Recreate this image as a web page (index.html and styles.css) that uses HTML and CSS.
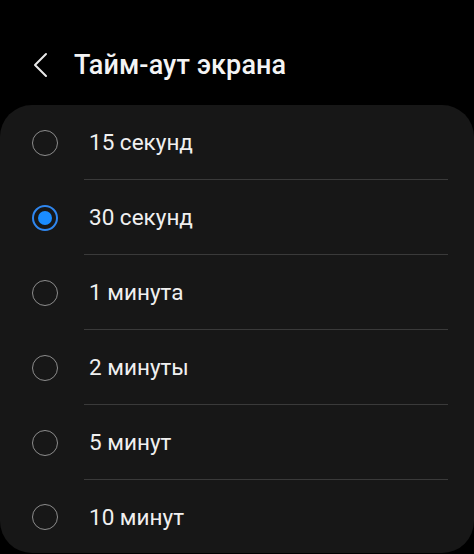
FILE: index.html
```html
<!DOCTYPE html>
<html lang="ru">
<head>
<meta charset="utf-8">
<link rel="stylesheet" href="styles.css">
</head>
<body>
<div class="screen">
  <header class="header">
    <svg class="back" width="24" height="30" viewBox="0 0 24 30">
      <polyline points="17,4 6,15 17,26" fill="none" stroke="#e8e8e8" stroke-width="2" stroke-linecap="round" stroke-linejoin="round"/>
    </svg>
    <h1 class="title">Тайм-аут экрана</h1>
  </header>
  <div class="card">
    <div class="row"><span class="radio"></span><div class="label">15 секунд</div></div>
    <div class="row"><span class="radio on"></span><div class="label">30 секунд</div></div>
    <div class="row"><span class="radio"></span><div class="label">1 минута</div></div>
    <div class="row"><span class="radio"></span><div class="label">2 минуты</div></div>
    <div class="row"><span class="radio"></span><div class="label">5 минут</div></div>
    <div class="row last"><span class="radio"></span><div class="label">10 минут</div></div>
  </div>
</div>
</body>
</html>
```
FILE: styles.css
```css
html, body {
  margin: 0;
  padding: 0;
  background: #000;
}
.screen {
  width: 474px;
  height: 554px;
  overflow: hidden;
  font-family: Roboto, "Noto Sans", sans-serif;
  color: #f2f2f2;
}
.header {
  height: 105px;
  display: flex;
  align-items: center;
  padding-left: 29px;
  box-sizing: border-box;
  padding-top: 50px;
  padding-bottom: 25px;
}
.back {
  display: block;
  margin-top: -1px;
}
.title {
  margin: 0 0 0 21px;
  font-size: 27px;
  font-weight: 500;
  color: #f4f4f4;
  letter-spacing: 0.1px;
}
.card {
  margin: 0;
  background: #171717;
  border-radius: 32px;
  height: 448px;
  display: flex;
  flex-direction: column;
}
.row {
  height: 75px;
  display: flex;
  align-items: stretch;
}
.row.last {
  height: 73px;
}
.radio {
  width: 26px;
  height: 26px;
  box-sizing: border-box;
  border: 1.5px solid #8c8c8c;
  border-radius: 50%;
  margin-left: 32px;
  align-self: center;
  flex: none;
  display: flex;
  align-items: center;
  justify-content: center;
}
.radio.on {
  border: 2px solid #2f86ee;
}
.radio.on::after {
  content: "";
  width: 14px;
  height: 14px;
  border-radius: 50%;
  background: #1a8cff;
}
.label {
  flex: 1;
  margin-left: 26px;
  margin-right: 26px;
  padding-left: 5px;
  display: flex;
  align-items: center;
  font-size: 22.5px;
  color: #f0f0f0;
  border-bottom: 1px solid #3a3a3a;
}
.row.last .label {
  border-bottom: none;
}
```
